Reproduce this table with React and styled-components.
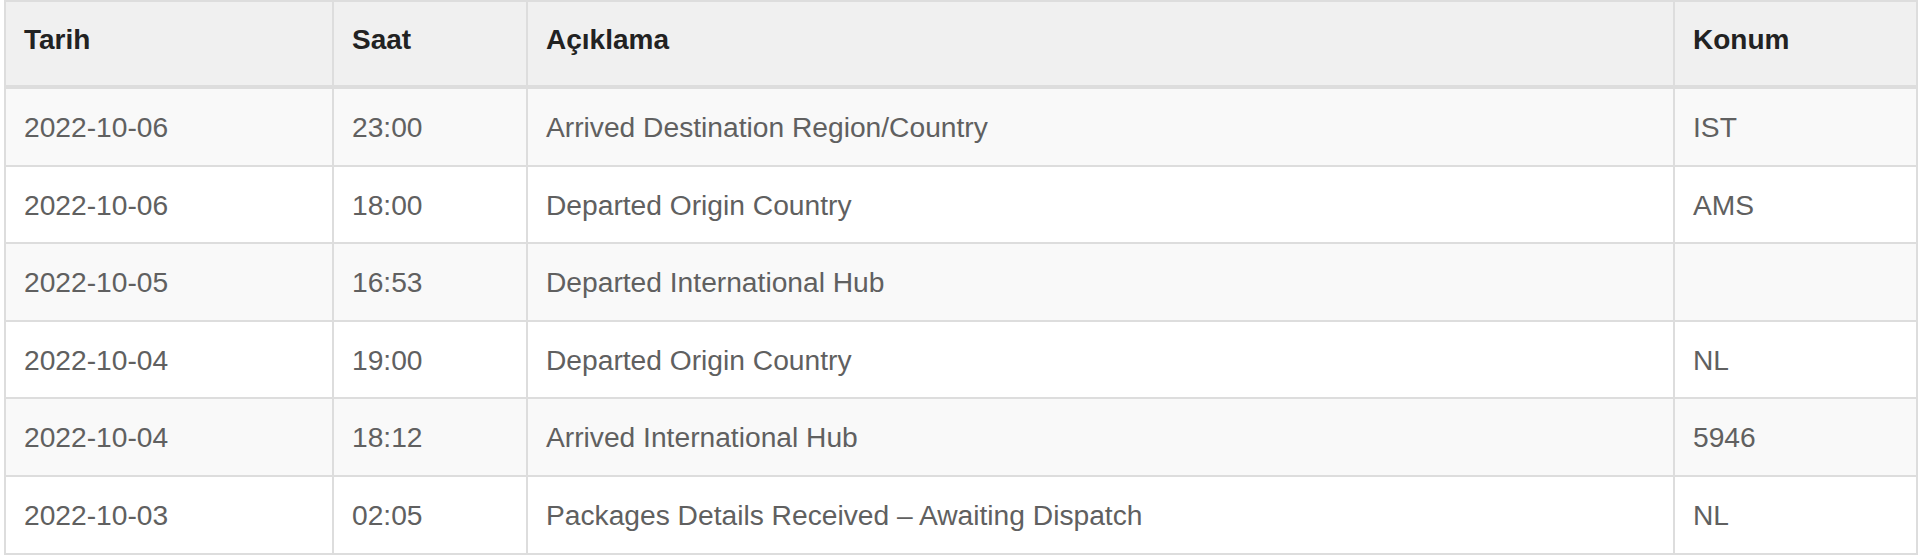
import React from 'react';
import styled, { createGlobalStyle } from 'styled-components';

const GlobalStyle = createGlobalStyle`
  body {
    margin: 0;
    background: #fff;
    font-family: "Liberation Sans", Arial, sans-serif;
  }
`;

const Wrapper = styled.div`
  padding: 0 2px 0 4px;
`;

const Table = styled.table`
  width: 1914px;
  border-collapse: collapse;
  table-layout: fixed;
  border: 2px solid #dddddd;
  font-size: 28px;
`;

const HeadCell = styled.th`
  text-align: left;
  vertical-align: bottom;
  font-weight: bold;
  color: #222;
  background-color: #f0f0f0;
  line-height: 40px;
  padding: 18px 18px 25px;
  border: 2px solid #dddddd;
  border-bottom-width: 4px;
`;

const Row = styled.tr`
  background-color: ${(p) => (p.$odd ? '#f9f9f9' : '#ffffff')};
`;

const Cell = styled.td`
  color: #606060;
  font-size: 28.2px;
  line-height: 39.6px;
  padding: 19px 18px 17px;
  border: 2px solid #dddddd;
  vertical-align: top;
`;

const rows = [
  ['2022-10-06', '23:00', 'Arrived Destination Region/Country', 'IST'],
  ['2022-10-06', '18:00', 'Departed Origin Country', 'AMS'],
  ['2022-10-05', '16:53', 'Departed International Hub', ''],
  ['2022-10-04', '19:00', 'Departed Origin Country', 'NL'],
  ['2022-10-04', '18:12', 'Arrived International Hub', '5946'],
  ['2022-10-03', '02:05', 'Packages Details Received – Awaiting Dispatch', 'NL'],
];

const App = () => {
  return (
    <Wrapper>
      <GlobalStyle />
      <Table>
        <colgroup>
          <col style={{ width: 328 }} />
          <col style={{ width: 194 }} />
          <col style={{ width: 1147 }} />
          <col style={{ width: 243 }} />
        </colgroup>
        <thead>
          <tr>
            <HeadCell>Tarih</HeadCell>
            <HeadCell>Saat</HeadCell>
            <HeadCell>Açıklama</HeadCell>
            <HeadCell>Konum</HeadCell>
          </tr>
        </thead>
        <tbody>
          {rows.map((r, i) => (
            <Row key={i} $odd={i % 2 === 0}>
              {r.map((c, j) => (
                <Cell key={j}>{c}</Cell>
              ))}
            </Row>
          ))}
        </tbody>
      </Table>
    </Wrapper>
  );
};

export default App;
